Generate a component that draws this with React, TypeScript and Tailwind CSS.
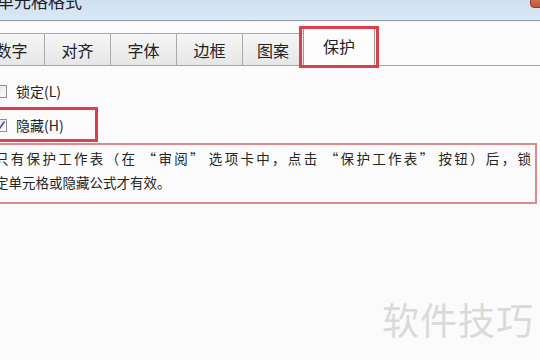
import React from "react";

const tabs = ["数字", "对齐", "字体", "边框", "图案"];

export default function App() {
  return (
    <div
      className="relative w-[540px] h-[360px] overflow-hidden bg-[#fbfbfb] text-[#1e1e1e]"
      style={{ fontFamily: '"Noto Sans CJK SC", "Noto Sans", sans-serif' }}
    >
      {/* title bar */}
      <div className="relative h-[21px] bg-gradient-to-b from-[#d0e0f0] to-[#dbe8f5] border-b border-[#8e9aa8] overflow-hidden">
        <div className="-mt-[10px] -ml-[3px] text-[17px] leading-[22px] text-[#202020]">单元格格式</div>
        <div className="absolute right-[-8px] top-[-8px] w-[18px] h-[16px] rounded-[4px] bg-gradient-to-b from-[#d88a74] to-[#c2553c] border border-[#8f3b2a]" />
      </div>
      <div className="h-px bg-[#eef2f6]" />

      {/* tabs */}
      <div className="relative mt-[5px] flex items-end h-[39px] border-b border-[#a7a7a7]">
        <div className="flex items-end -ml-[22px]">
          {tabs.map((t, i) => (
            <div
              key={t}
              className={`flex items-center justify-center h-[32px] ${i === 4 ? "w-[62px]" : "w-[67px]"} border border-b-0 border-[#a9a9a9] bg-gradient-to-b from-[#f6f6f6] to-[#e6e6e6] text-[16px] text-[#222] ${i === 0 ? "" : "-ml-px"}`}
            >
              {t}
            </div>
          ))}
          <div className="relative -ml-px -mb-px flex items-center justify-center h-[39px] w-[72px] border border-b-0 border-[#9a9a9a] bg-[#fdfdfd] text-[16px] text-[#222]">
            <span className="-mt-[2px]">保护</span>
            <div className="absolute left-[-5px] top-[-2px] w-[80px] h-[42px] border-[3px] border-[#dc3f4b]" />
          </div>
        </div>
      </div>

      {/* checkboxes */}
      <div className="mt-[17px] flex items-center h-[16px]">
        <div className="-ml-[6px] w-[13px] h-[13px] border border-[#8f8f8f] bg-gradient-to-br from-[#e4e4e4] to-[#fbfbfb]" />
        <span className="ml-[9px] text-[14px] leading-[16px] text-[#222]">锁定(L)</span>
      </div>
      <div className="relative mt-[18px] flex items-center h-[16px]">
        <div className="-ml-[6px] w-[13px] h-[13px] border border-[#8f8f8f] bg-gradient-to-br from-[#e4e4e4] to-[#fbfbfb] flex items-center justify-center">
          <svg width="11" height="11" viewBox="0 0 11 11">
            <path d="M2 6 L4.5 8.5 L9.5 1.5" stroke="#4a5a7a" strokeWidth="1.6" fill="none" />
          </svg>
        </div>
        <span className="ml-[9px] text-[14px] leading-[16px] text-[#222]">隐藏(H)</span>
        <div className="absolute left-[-10px] top-[-10px] w-[108px] h-[35px] border-[3px] border-[#dc3f4b]" />
      </div>

      {/* paragraph */}
      <div className="mt-[10px] w-[537px] h-[61px] border-t-2 border-b-2 border-r-2 border-[#da8990] pt-[1px] overflow-hidden">
        <div className="-ml-[5px] w-[536px] text-[13.5px] leading-[24px] text-[#262626] text-justify [text-align-last:justify] whitespace-nowrap">
          只有保护工作表（在 “审阅” 选项卡中，点击 “保护工作表” 按钮）后，锁
        </div>
        <div className="-ml-[5px] text-[13.5px] leading-[24px] text-[#262626]">
          定单元格或隐藏公式才有效。
        </div>
      </div>

      {/* watermark */}
      <div className="absolute left-[382px] top-[294px] text-[37px] leading-[50px] text-[#dadada] tracking-[1px]">
        软件技巧
      </div>
    </div>
  );
}
